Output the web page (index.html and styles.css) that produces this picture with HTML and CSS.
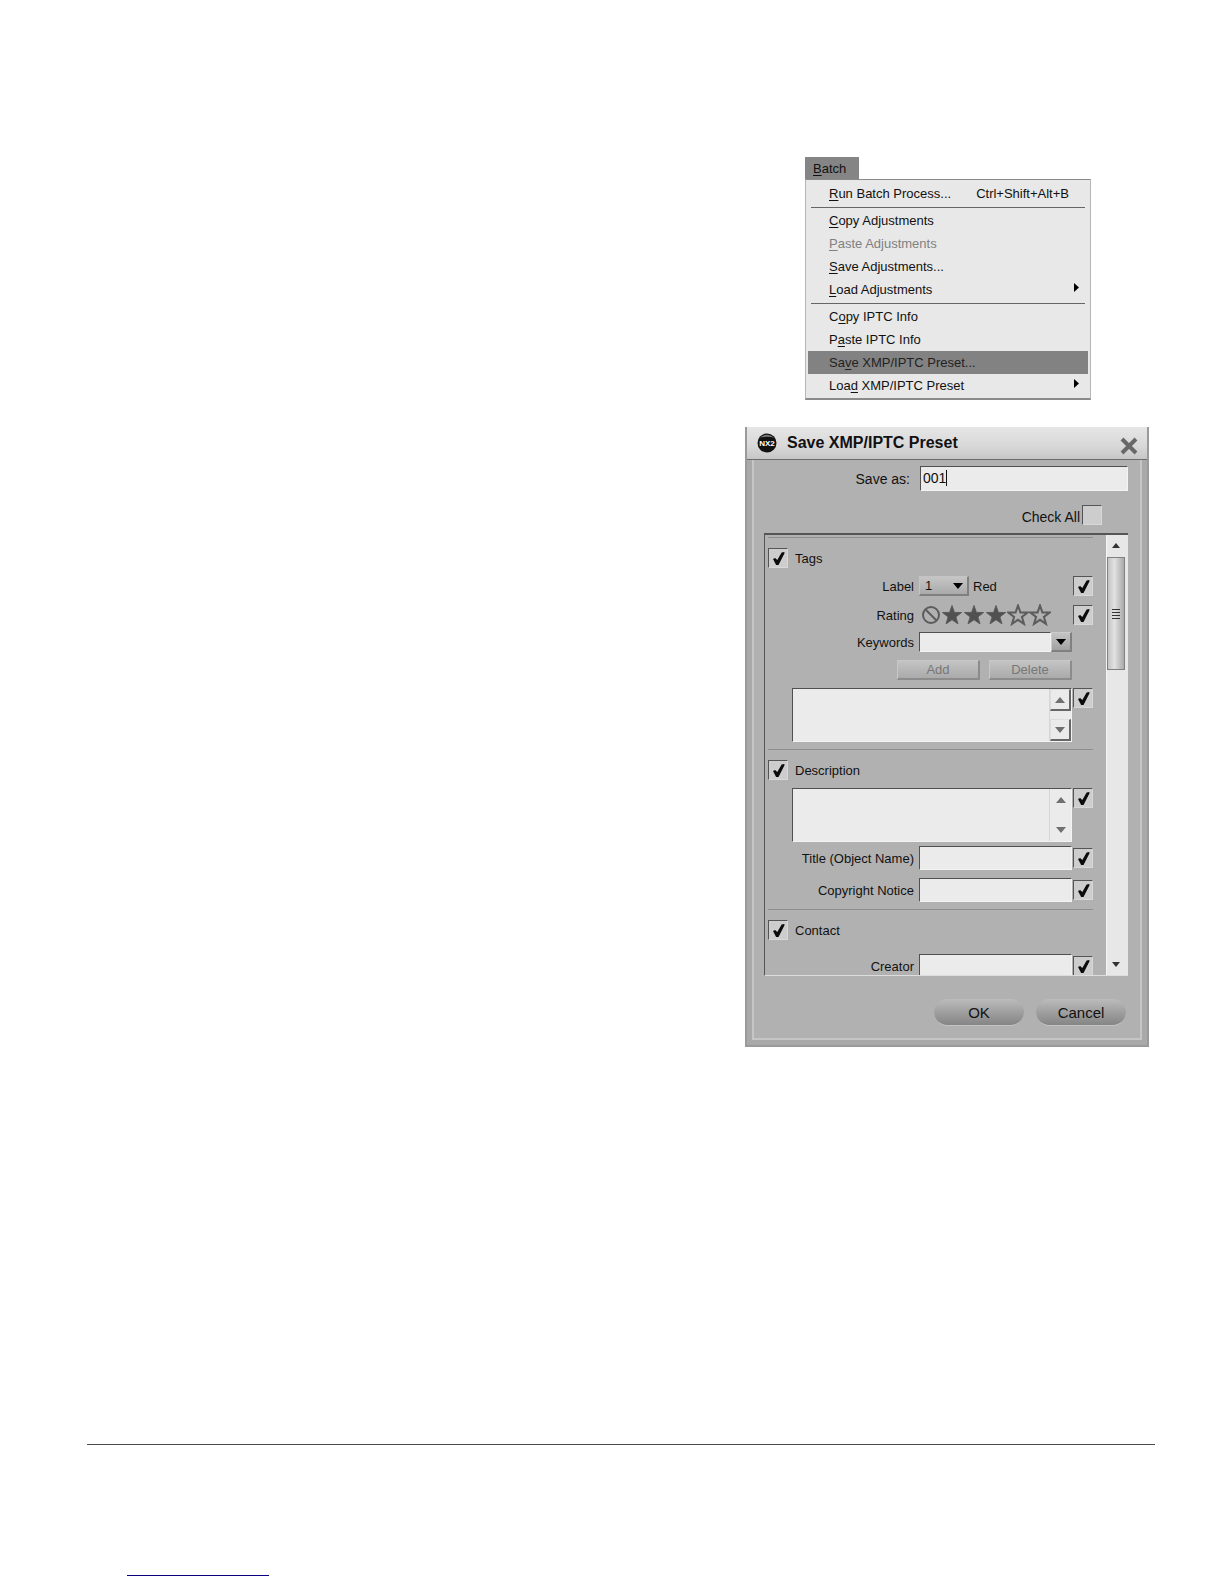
FILE: index.html
```html
<!DOCTYPE html>
<html lang="en">
<head>
<meta charset="utf-8">
<meta name="viewport" content="width=device-width, initial-scale=1">
<title>Save XMP/IPTC Preset</title>
<link rel="stylesheet" href="styles.css">
</head>
<body>
<svg width="0" height="0" class="defs" aria-hidden="true">
  <symbol id="star" viewBox="0 0 22 22"><path d="M11 1.5 L13.4 8.4 L20.6 8.5 L14.9 12.9 L17 19.9 L11 15.8 L5 19.9 L7.100 12.900 L1.400 8.500 L8.600 8.400 Z"/></symbol>
  <symbol id="up" viewBox="0 0 10 6"><path d="M0 6 L5 0 L10 6 Z"/></symbol>
  <symbol id="down" viewBox="0 0 10 6"><path d="M0 0 L10 0 L5 6 Z"/></symbol>
</svg>
<main class="figures">
  <nav class="menu" aria-label="Batch menu">
    <button class="menu-title" type="button"><u>B</u>atch</button>
    <div class="menu-list">
      <button class="item" type="button"><span><u>R</u>un Batch Process...</span><span class="shortcut">Ctrl+Shift+Alt+B</span></button>
      <hr class="menu-line">
      <button class="item" type="button"><span><u>C</u>opy Adjustments</span></button>
      <button class="item" type="button" disabled><span><u>P</u>aste Adjustments</span></button>
      <button class="item" type="button"><span><u>S</u>ave Adjustments...</span></button>
      <button class="item" type="button"><span><u>L</u>oad Adjustments</span><svg class="sub" viewBox="0 0 5 9"><path d="M0 0 L5 4.500 L0 9 Z"/></svg></button>
      <hr class="menu-line">
      <button class="item" type="button"><span>C<u>o</u>py IPTC Info</span></button>
      <button class="item" type="button"><span>P<u>a</u>ste IPTC Info</span></button>
      <button class="item selected" type="button"><span>Sa<u>v</u>e XMP/IPTC Preset...</span></button>
      <button class="item" type="button"><span>Loa<u>d</u> XMP/IPTC Preset</span><svg class="sub" viewBox="0 0 5 9"><path d="M0 0 L5 4.500 L0 9 Z"/></svg></button>
    </div>
  </nav>

  <form class="dialog">
    <header class="titlebar">
      <svg class="logo" viewBox="0 0 20 20" aria-hidden="true"><circle cx="10" cy="10" r="9.500" fill="#111"/><path d="M3 4.500 Q10 -1 17 4.500 Q10 3 3 4.500" fill="#777"/><text x="10" y="13" text-anchor="middle">NX2</text></svg>
      <h1>Save XMP/IPTC Preset</h1>
      <button class="close" type="button" aria-label="Close"><svg viewBox="0 0 18 18"><path d="M2 2 L16 16 M16 2 L2 16"/></svg></button>
    </header>
    <div class="frame">
      <div class="save-row">
        <label for="name">Save as:</label>
        <span class="name-box"><input id="name" class="field name" type="text" value="001"></span>
      </div>
      <div class="all-row">
        <label for="all">Check All</label><input id="all" class="check" type="checkbox">
      </div>

      <div class="panel">
        <div class="content">
          <section>
            <div class="head"><input id="tags" class="check" type="checkbox" checked><label for="tags">Tags</label></div>
            <div class="row">
              <label for="label">Label</label>
              <div class="cell">
                <span class="select-box"><select id="label"><option>1</option><option>2</option></select><svg class="drop"><use href="#down"/></svg></span>
                <span class="red">Red</span>
              </div>
              <input class="check" type="checkbox" checked aria-label="Save label">
            </div>
            <div class="row">
              <span class="caption">Rating</span>
              <div class="cell rating" role="img" aria-label="3 of 5 stars">
                <svg class="none" viewBox="0 0 20 20"><circle cx="10" cy="10" r="8"/><path d="M4.500 4.500 L15.500 15.500"/></svg>
                <svg class="star full"><use href="#star"/></svg><svg class="star full"><use href="#star"/></svg><svg class="star full"><use href="#star"/></svg><svg class="star"><use href="#star"/></svg><svg class="star"><use href="#star"/></svg>
              </div>
              <input class="check" type="checkbox" checked aria-label="Save rating">
            </div>
            <div class="row">
              <label for="keywords">Keywords</label>
              <div class="cell"><input id="keywords" class="field" type="text"><button class="combo" type="button" aria-label="Show keywords"><svg class="drop"><use href="#down"/></svg></button></div>
            </div>
            <div class="actions"><button type="button" disabled>Add</button><button type="button" disabled>Delete</button></div>
            <div class="area-row">
              <div class="area raised"><textarea aria-label="Keyword list"></textarea><div class="arrows"><button type="button" aria-label="Up"><svg><use href="#up"/></svg></button><button type="button" aria-label="Down"><svg><use href="#down"/></svg></button></div></div>
              <input class="check" type="checkbox" checked aria-label="Save keywords">
            </div>
          </section>
          <section>
            <div class="head"><input id="description" class="check" type="checkbox" checked><label for="description">Description</label></div>
            <div class="tight">
              <div class="area-row">
                <div class="area"><textarea aria-label="Description text"></textarea><div class="arrows"><button type="button" aria-label="Up"><svg><use href="#up"/></svg></button><button type="button" aria-label="Down"><svg><use href="#down"/></svg></button></div></div>
                <input class="check" type="checkbox" checked aria-label="Save description">
              </div>
              <div class="row tall"><label for="title">Title (Object Name)</label><input id="title" class="field" type="text"><input class="check" type="checkbox" checked aria-label="Save title"></div>
            </div>
            <div class="row tall"><label for="copyright">Copyright Notice</label><input id="copyright" class="field" type="text"><input class="check" type="checkbox" checked aria-label="Save copyright notice"></div>
          </section>
          <section class="spaced">
            <div class="head"><input id="contact" class="check" type="checkbox" checked><label for="contact">Contact</label></div>
            <div class="row tall"><label for="creator">Creator</label><input id="creator" class="field" type="text"><input class="check" type="checkbox" checked aria-label="Save creator"></div>
          </section>
        </div>
        <div class="scrollbar" aria-hidden="true">
          <svg class="tip"><use href="#up"/></svg>
          <div class="thumb"><i></i><i></i><i></i><i></i></div>
          <svg class="tip end"><use href="#down"/></svg>
        </div>
      </div>

      <div class="buttons"><button type="submit">OK</button><button type="button">Cancel</button></div>
    </div>
  </form>
</main>
<footer class="foot"><a href="#" aria-label="Home"></a></footer>
</body>
</html>
```
FILE: styles.css
```css
* { box-sizing: border-box; }

body {
  margin: 0;
  min-height: 100vh;
  display: flex;
  flex-direction: column;
  background: #fff;
  color: #111;
  font-family: "Liberation Sans", Arial, sans-serif;
  font-size: 13px;
}

button, input, select, textarea {
  margin: 0;
  padding: 0;
  border: 0;
  border-radius: 0;
  background: none;
  color: inherit;
  font: inherit;
  outline: 0;
}

svg { display: block; }
.defs { position: absolute; }

.figures {
  display: flex;
  flex-direction: column;
  align-items: flex-end;
  gap: 27px;
  padding: 157px 75px 40px;
}

/* Batch menu */
.menu {
  width: 286px;
  margin-right: 58px;
}

.menu u { text-underline-offset: 2px; }

.menu-title {
  display: block;
  width: 54px;
  height: 22px;
  padding-left: 8px;
  background: #858585;
  text-align: left;
}

.menu-list {
  padding: 2px 2px 1px;
  border: 1px solid #b5b5b5;
  border-top-color: #8a8a8a;
  border-bottom: 2px solid #8a8a8a;
  background: #e8e8e8;
}

.item {
  display: flex;
  align-items: center;
  justify-content: space-between;
  width: 100%;
  height: 23px;
  padding: 0 9px 0 21px;
}

.item:disabled { color: #808080; }
.item.selected { background: #828282; color: #222; }
.shortcut { padding-right: 10px; }
.sub { width: 5px; height: 9px; margin-bottom: 4px; }

.menu-line {
  height: 1px;
  margin: 2px 3px 1px;
  border: 0;
  background: #666;
}

/* Dialog */
.dialog {
  width: 404px;
  border: 2px solid #9a9a9a;
  border-top: 0;
  background: #a9a9a9;
}

.titlebar {
  display: flex;
  align-items: center;
  height: 33px;
  padding: 0 9px 0 10px;
  border-bottom: 1px solid #6c6c6c;
  background: linear-gradient(#e6e6e6, #d8d8d8 60%, #c6c6c6);
}

.logo { width: 20px; height: 20px; }
.logo text { font-size: 8px; font-weight: bold; fill: #fff; }

h1 {
  flex: 1;
  margin: 0 0 0 10px;
  font-size: 16px;
  line-height: 20px;
}

.close { width: 18px; height: 18px; margin-top: 6px; }
.close path { fill: none; stroke: #686868; stroke-width: 4; }

.frame {
  margin: 0 5px 5px;
  padding: 6px 12px 12px 10px;
  border: 2px solid #c6c6c6;
  border-top: 0;
  background: #b1b1b1;
}

.save-row {
  display: flex;
  align-items: center;
  justify-content: flex-end;
  gap: 10px;
  font-size: 14px;
}

.name-box { position: relative; width: 208px; }

/* Text caret after the typed name */
.name-box::after {
  content: "";
  position: absolute;
  top: 4px;
  left: 26px;
  width: 1px;
  height: 16px;
  background: #111;
}

.all-row {
  display: flex;
  align-items: center;
  justify-content: flex-end;
  gap: 2px;
  margin: 14px 26px 8px 0;
  font-size: 14px;
}

.all-row label { padding-top: 4px; }

.field {
  flex: 1;
  width: 100%;
  min-width: 0;
  height: 24px;
  padding: 0 3px;
  border: 1px solid #505050;
  border-right-color: #f3f3f3;
  border-bottom-color: #f3f3f3;
  background: #ebebeb;
}

.name { display: block; height: 25px; padding: 0 2px 2px; }

.check {
  appearance: none;
  width: 20px;
  height: 20px;
  border: 1px solid #555;
  border-right-color: #d8d8d8;
  border-bottom-color: #d8d8d8;
  background: #cdcdcd;
}

.check:checked::before {
  content: "";
  display: block;
  width: 12px;
  height: 13px;
  margin: 3px 0 0 4px;
  background: #0b0b0b;
  clip-path: polygon(0 54%, 18% 46%, 36% 62%, 72% 4%, 94% 0, 96% 10%, 46% 100%, 26% 100%);
}

.panel {
  display: flex;
  height: 443px;
  border: 1px solid #555;
  border-width: 2px 0 1px 1px;
  border-bottom-color: #ddd;
}

.content {
  flex: 1;
  padding: 2px 13px 0 3px;
  overflow: hidden;
}

section {
  display: flex;
  flex-direction: column;
  gap: 8px;
  padding: 10px 0 7px;
  border-top: 1px solid #8e8e8e;
}

.spaced { gap: 14px; }
.head { display: flex; align-items: center; gap: 7px; }

.row {
  display: grid;
  grid-template-columns: 1fr 153px 20px;
  align-items: center;
  gap: 1px;
  height: 20px;
}

.row > label, .caption { padding-right: 4px; text-align: right; }
.tall { height: 24px; }
.cell { display: flex; align-items: center; }
.cell .field { height: 20px; }

.select-box {
  display: flex;
  align-items: center;
  width: 50px;
  height: 20px;
  padding-right: 4px;
  border: 1px solid #c4c4c4;
  border-right: 2px solid #808080;
  border-bottom: 2px solid #808080;
  background: linear-gradient(#c6c6c6, #aaa);
}

.select-box select { appearance: none; flex: 1; padding-left: 5px; }
.drop { width: 10px; height: 6px; }
.red { margin-left: 4px; }

.rating { padding-left: 2px; }
.none { width: 20px; height: 20px; }
.none * { fill: none; stroke: #5c5c5c; stroke-width: 2; }
.star { width: 22px; height: 22px; fill: none; stroke: #5c5c5c; stroke-width: 2; }
.full { fill: #505050; stroke-width: 1; }

.combo {
  display: grid;
  place-items: center;
  width: 21px;
  height: 20px;
  border: 1px solid #ccc;
  border-right: 2px solid #808080;
  border-bottom: 2px solid #808080;
  background: linear-gradient(#c4c4c4, #a2a2a2);
}

.actions {
  display: flex;
  justify-content: flex-end;
  gap: 9px;
  padding-right: 21px;
}

.actions button {
  width: 83px;
  height: 20px;
  border: 1px solid #c8c8c8;
  border-right: 2px solid #8c8c8c;
  border-bottom: 2px solid #8c8c8c;
  background: linear-gradient(#c4c4c4, #aaa);
  color: #777;
}

.tight { display: flex; flex-direction: column; gap: 4px; }
.area-row { display: flex; gap: 1px; padding-left: 24px; }

.area {
  display: flex;
  flex: 1;
  height: 54px;
  border: 1px solid #505050;
  border-right-color: #f3f3f3;
  border-bottom-color: #f3f3f3;
  background: #ebebeb;
}

.area textarea { flex: 1; min-width: 0; resize: none; }

.arrows {
  display: flex;
  flex-direction: column;
  justify-content: space-between;
  width: 22px;
  border-left: 1px solid #d6d6d6;
}

.arrows button { display: grid; place-items: center; height: 22px; }
.arrows svg { width: 10px; height: 6px; fill: #707070; }
.raised button {
  border: 1px solid #ddd;
  border-right: 2px solid #666;
  border-bottom: 2px solid #666;
}

.scrollbar {
  display: flex;
  flex-direction: column;
  align-items: center;
  width: 22px;
  padding: 8px 3px 8px 0;
  border-left: 1px solid #f4f4f4;
  background: #e7e7e7;
}

.tip { width: 8px; height: 5px; fill: #333; }
.end { margin-top: auto; }

.thumb {
  display: flex;
  flex-direction: column;
  align-items: center;
  justify-content: center;
  gap: 1px;
  width: 18px;
  height: 113px;
  margin-top: 9px;
  border: 1px solid #808080;
  background: linear-gradient(90deg, #c4c4c4, #e2e2e2 40%, #a9a9a9);
}

.thumb i { width: 8px; height: 2px; border-bottom: 1px solid #333; }

.buttons {
  display: flex;
  justify-content: flex-end;
  gap: 12px;
  margin-top: 23px;
  padding-right: 2px;
}

.buttons button {
  width: 90px;
  height: 27px;
  border-radius: 14px;
  background: linear-gradient(#bcbcbc, #a2a2a2 45%, #858585);
  border-bottom: 1px solid #c4c4c4;
  font-size: 15px;
}

/* Page footer */
.foot {
  margin: auto 69px 0 87px;
  padding: 130px 40px 8px;
  border-top: 1px solid #4a4a4a;
}

.foot a { display: block; width: 142px; height: 1px; background: #0c0080; }
```
